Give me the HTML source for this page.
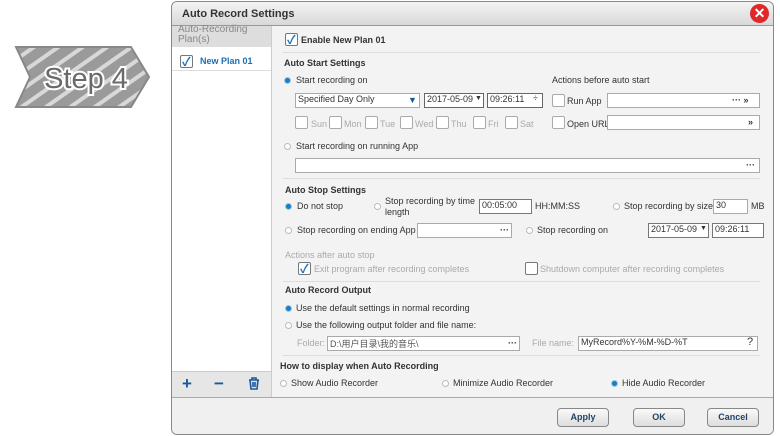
<!DOCTYPE html>
<html><head><meta charset="utf-8"><style>
*{box-sizing:border-box;margin:0;padding:0}
body{width:780px;height:436px;background:#fff;position:relative;overflow:hidden;font-family:"Liberation Sans","Noto Sans CJK SC",sans-serif;font-size:9px;color:#333}
.a{position:absolute;white-space:nowrap}
.b{font-weight:bold}
.g{color:#aaa}
.in{position:absolute;background:#fff;border:1px solid #aaa;height:15px}
.cb{position:absolute;width:13px;height:13px;border:1px solid #777;border-radius:2px;background:#fff}
.cbg{border-color:#aaa}
.rd{position:absolute;width:7px;height:7px;border-radius:50%;border:1px solid #bbb;background:#fff}
.rd.on{background:#1a7ad0;border-color:#9cc}
.sep{position:absolute;height:1px;background:#ddd;left:283px;width:477px}
.btn{position:absolute;top:408px;width:52px;height:19px;border:1px solid #888;border-radius:4px;background:linear-gradient(#fafafa,#ddd);font-weight:bold;color:#246;text-align:center;line-height:17px}
.chk{position:absolute;left:1px;top:-3px;color:#1a70c0;font-size:12px;font-weight:bold}
</style></head><body>
<svg class="a" style="left:0;top:0" width="160" height="120">
<defs><pattern id="st" width="14" height="14" patternUnits="userSpaceOnUse" patternTransform="rotate(-35)"><rect width="14" height="14" fill="#9a9a9a"/><rect width="14" height="4" fill="#d8d8d8"/></pattern></defs>
<polygon points="16,47 131,47 149,77 131,107 16,107 30,77" fill="url(#st)" stroke="#888" stroke-width="2"/>
<text x="86" y="88" text-anchor="middle" font-family="Liberation Sans" font-size="29" fill="#6a6a6a" stroke="#fff" stroke-width="4" paint-order="stroke">Step 4</text>
</svg>
<div class="a" style="left:171px;top:1px;width:603px;height:434px;border:1px solid #888;border-radius:6px;background:#f3f3f3;overflow:hidden">
<div class="a" style="left:0;top:0;width:603px;height:24px;background:linear-gradient(#f4f4f4,#d8d8d8);border-bottom:1px solid #999"></div>
<div class="a b" style="left:10px;top:6px;font-size:11px;color:#333">Auto Record Settings</div>
<div class="a" style="left:578px;top:2px;width:19px;height:19px;border-radius:50%;background:#e02828;color:#fff;font-weight:bold;font-size:14px;text-align:center;line-height:18px">✕</div>
<div class="a" style="left:0;top:24px;width:100px;height:371px;background:#fff;border-right:1px solid #ccc"></div>
<div class="a" style="left:0;top:24px;width:99px;height:21px;background:#ddd"></div>
<div class="a" style="left:0;top:369px;width:100px;height:26px;background:#e6e6e6;border-top:1px solid #ccc;border-right:1px solid #ccc"></div>
<div class="a" style="left:0;top:395px;width:603px;height:40px;background:#f0f0f0;border-top:1px solid #aaa"></div>
</div>
<div class="a" style="left:178px;top:25px;line-height:10px;color:#888;font-size:10px">Auto-Recording<br>Plan(s)</div>
<div class="cb" style="left:180px;top:55px"><span class="chk">✓</span></div>
<div class="a b" style="left:200px;top:56px;color:#1a6fb5">New Plan 01</div>
<div class="a" style="left:172px;top:70px;width:99px;height:1px;background:#ddd"></div>
<div class="a b" style="left:182px;top:374px;font-size:17px;color:#1a5a9a">+</div>
<div class="a b" style="left:214px;top:374px;font-size:17px;color:#1a5a9a">−</div>
<svg class="a" style="left:248px;top:377px" width="12" height="13"><path d="M1 3h10M4 3V1h4v2M2 3l1 9h6l1-9M5 5v5M7 5v5" stroke="#1a5a9a" stroke-width="1.6" fill="none"/></svg>

<div class="cb" style="left:285px;top:33px"><span class="chk">✓</span></div>
<div class="a b" style="left:301px;top:35px">Enable New Plan 01</div>
<div class="sep" style="top:52px"></div>
<div class="a b" style="left:284px;top:58px">Auto Start Settings</div>
<div class="rd on" style="left:284px;top:77px"></div><div class="a" style="left:296px;top:75px">Start recording on</div>
<div class="a" style="left:552px;top:75px">Actions before auto start</div>
<div class="in" style="left:295px;top:93px;width:125px;padding-left:2px">Specified Day Only<span class="a" style="left:112px;top:1px;color:#1a5a9a">▼</span></div>
<div class="in" style="left:424px;top:93px;width:60px;padding-left:2px;border-color:#666">2017-05-09<span class="a" style="left:50px;top:1px;font-size:7px">▼</span></div>
<div class="in" style="left:487px;top:93px;width:56px;padding-left:2px;border-color:#666">09:26:11<span class="a" style="left:45px;top:-1px">÷</span></div>
<div class="cb cbg" style="left:552px;top:94px"></div><div class="a" style="left:567px;top:96px">Run App</div>
<div class="in" style="left:607px;top:93px;width:153px"><span class="a b" style="left:124px;top:1px">··· »</span></div>
<div class="cb cbg" style="left:295px;top:116px"></div><div class="a g" style="left:311px;top:119px">Sun</div>
<div class="cb cbg" style="left:329px;top:116px"></div><div class="a g" style="left:344px;top:119px">Mon</div>
<div class="cb cbg" style="left:365px;top:116px"></div><div class="a g" style="left:380px;top:119px">Tue</div>
<div class="cb cbg" style="left:400px;top:116px"></div><div class="a g" style="left:415px;top:119px">Wed</div>
<div class="cb cbg" style="left:436px;top:116px"></div><div class="a g" style="left:451px;top:119px">Thu</div>
<div class="cb cbg" style="left:473px;top:116px"></div><div class="a g" style="left:488px;top:119px">Fri</div>
<div class="cb cbg" style="left:505px;top:116px"></div><div class="a g" style="left:520px;top:119px">Sat</div>
<div class="cb cbg" style="left:552px;top:116px"></div><div class="a" style="left:567px;top:119px">Open URL</div>
<div class="in" style="left:607px;top:115px;width:153px"><span class="a b" style="left:140px;top:1px">»</span></div>
<div class="rd" style="left:284px;top:143px"></div><div class="a" style="left:296px;top:141px">Start recording on running App</div>
<div class="in" style="left:295px;top:158px;width:465px"><span class="a b" style="left:450px;top:1px">···</span></div>
<div class="sep" style="top:178px"></div>
<div class="a b" style="left:285px;top:185px">Auto Stop Settings</div>
<div class="rd on" style="left:285px;top:203px"></div><div class="a" style="left:297px;top:201px">Do not stop</div>
<div class="rd" style="left:374px;top:203px"></div><div class="a" style="left:385px;top:196px;line-height:11px">Stop recording by time<br>length</div>
<div class="in" style="left:479px;top:199px;width:53px;padding-left:2px;border-color:#777">00:05:00</div>
<div class="a" style="left:535px;top:201px">HH:MM:SS</div>
<div class="rd" style="left:613px;top:203px"></div><div class="a" style="left:624px;top:201px">Stop recording by size</div>
<div class="in" style="left:713px;top:199px;width:35px;padding-left:2px">30</div>
<div class="a" style="left:751px;top:201px">MB</div>
<div class="rd" style="left:285px;top:227px"></div><div class="a" style="left:297px;top:225px">Stop recording on ending App</div>
<div class="in" style="left:417px;top:223px;width:95px"><span class="a b" style="left:82px;top:1px">···</span></div>
<div class="rd" style="left:526px;top:227px"></div><div class="a" style="left:537px;top:225px">Stop recording on</div>
<div class="in" style="left:648px;top:223px;width:61px;padding-left:2px;border-color:#777">2017-05-09<span class="a" style="left:51px;top:1px;font-size:7px">▼</span></div>
<div class="in" style="left:712px;top:223px;width:52px;padding-left:2px;border-color:#777">09:26:11</div>
<div class="a g" style="left:285px;top:250px">Actions after auto stop</div>
<div class="cb" style="left:298px;top:262px"><span class="chk">✓</span></div><div class="a g" style="left:314px;top:264px">Exit program after recording completes</div>
<div class="cb" style="left:525px;top:262px"></div><div class="a g" style="left:540px;top:264px">Shutdown computer after recording completes</div>
<div class="sep" style="top:281px"></div>
<div class="a b" style="left:285px;top:285px">Auto Record Output</div>
<div class="rd on" style="left:285px;top:305px"></div><div class="a" style="left:296px;top:303px">Use the default settings in normal recording</div>
<div class="rd" style="left:285px;top:322px"></div><div class="a" style="left:296px;top:320px">Use the following output folder and file name:</div>
<div class="a g" style="left:297px;top:338px">Folder:</div>
<div class="in" style="left:327px;top:336px;width:193px;padding-left:2px;color:#555">D:\用户目录\我的音乐\<span class="a b" style="left:180px;top:1px;color:#333">···</span></div>
<div class="a g" style="left:532px;top:338px">File name:</div>
<div class="in" style="left:578px;top:336px;width:180px;padding-left:2px">MyRecord%Y-%M-%D-%T<span class="a" style="left:168px;top:-1px;font-size:11px">?</span></div>
<div class="sep" style="top:355px"></div>
<div class="a b" style="left:280px;top:361px">How to display when Auto Recording</div>
<div class="rd" style="left:280px;top:380px"></div><div class="a" style="left:291px;top:378px">Show Audio Recorder</div>
<div class="rd" style="left:442px;top:380px"></div><div class="a" style="left:453px;top:378px">Minimize Audio Recorder</div>
<div class="rd on" style="left:611px;top:380px"></div><div class="a" style="left:622px;top:378px">Hide Audio Recorder</div>
<div class="btn" style="left:557px">Apply</div>
<div class="btn" style="left:633px">OK</div>
<div class="btn" style="left:707px">Cancel</div>
</body></html>
